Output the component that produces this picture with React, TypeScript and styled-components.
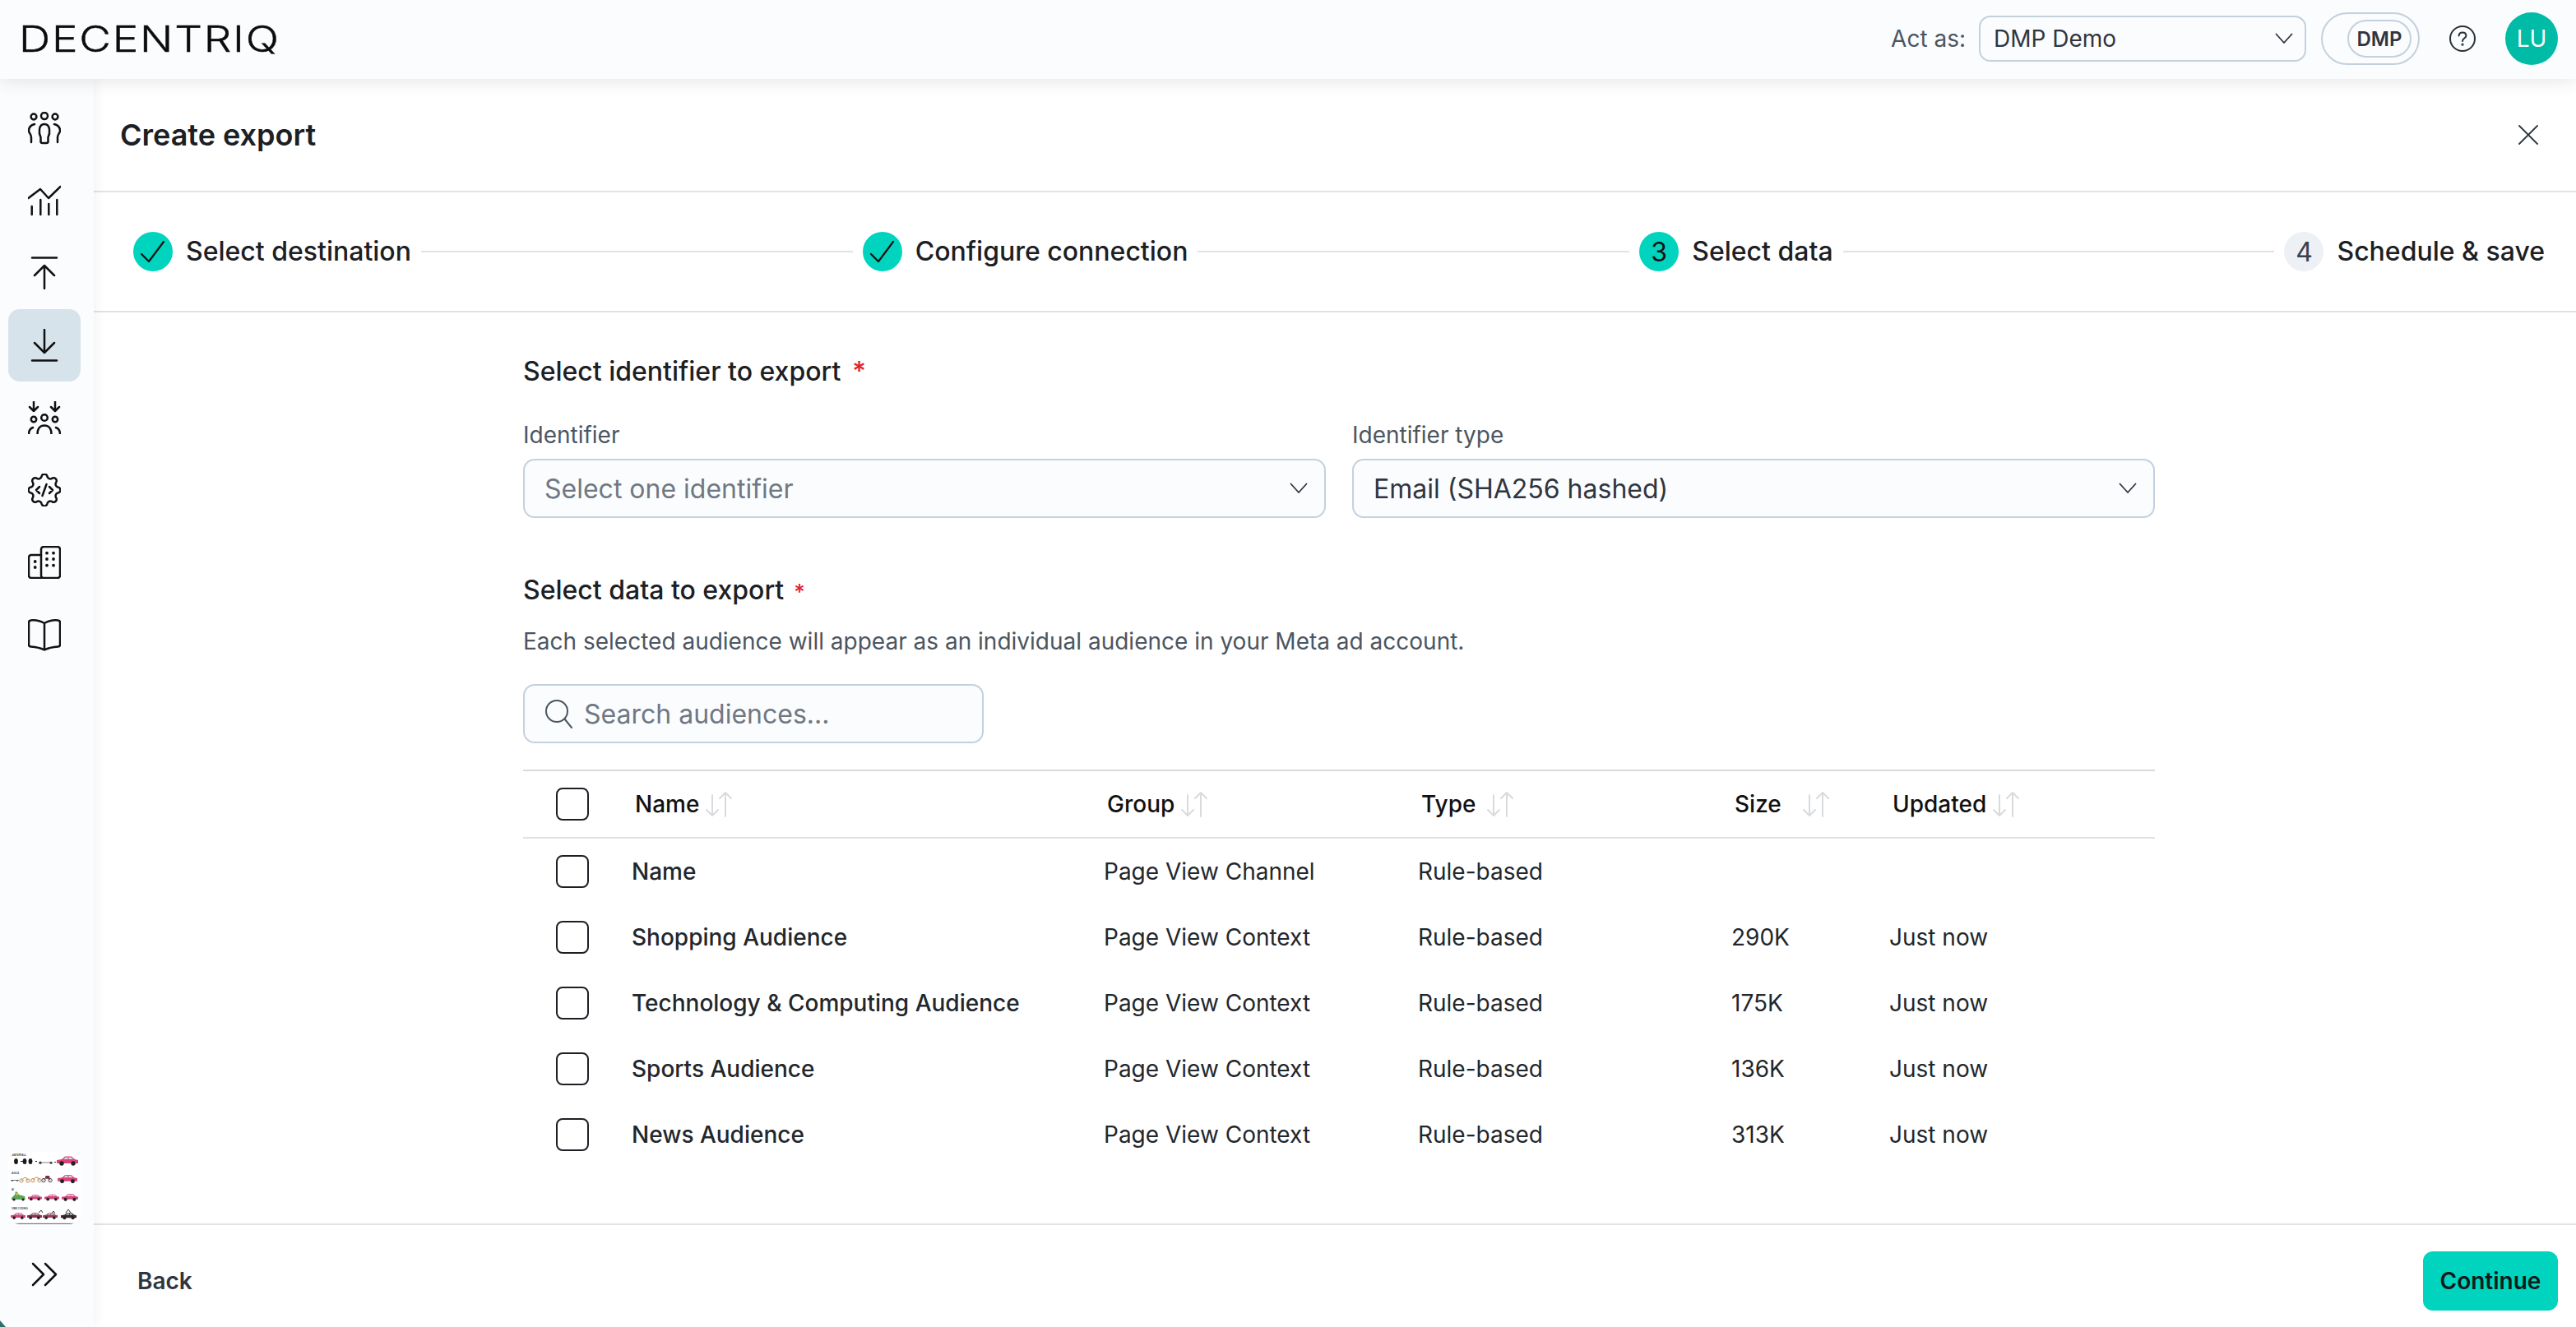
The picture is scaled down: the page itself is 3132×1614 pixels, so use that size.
import React from "react";
import styled, { createGlobalStyle } from "styled-components";

const Global = createGlobalStyle`
  html, body { margin: 0; padding: 0; background: #fff; }
  body { font-family: Inter, "Noto Sans", sans-serif; color: #1c2024; }
  * { box-sizing: border-box; }
`;

const Page = styled.div`
  width: 3132px; height: 1614px; display: flex; flex-direction: column; overflow: hidden; background: #fff;
`;
const TopBar = styled.header`
  height: 96px; flex: none; display: flex; align-items: center; justify-content: space-between;
  padding: 0 22px 0 23px; background: #fbfcfe; box-shadow: 0 2px 20px rgba(20, 30, 40, 0.12); position: relative; z-index: 2;
`;
const Logo = styled.div`
  font-size: 44px; line-height: 44px; font-weight: 300; color: #0c0c0c; letter-spacing: 1.5px;
  transform: scaleX(1.205); transform-origin: left center; -webkit-text-stroke: 0.4px #0c0c0c; margin-top: -2px;
`;
const TopActions = styled.div`display: flex; align-items: center; margin-top: -2px;`;
const ActLabel = styled.span`font-size: 28px; color: #4b5661; margin-right: 16px;`;
const ActSelect = styled.div`
  width: 398px; height: 56px; display: flex; align-items: center; justify-content: space-between;
  padding: 0 14px 0 16px; border: 2px solid #c3d1de; border-radius: 14px; font-size: 28px; color: #2f3640; background: #fbfcfe;
`;
const PillOuter = styled.div`
  width: 120px; height: 64px; margin-left: 18px; display: flex; align-items: center; justify-content: flex-end;
  padding-right: 8px; border: 2px solid #c3d1de; border-radius: 32px;
`;
const PillInner = styled.div`
  width: 78px; height: 46px; display: flex; align-items: center; justify-content: center;
  border: 2px solid #c3d1de; border-radius: 23px; font-size: 24px; font-weight: 600; color: #2f3640;
`;
const HelpWrap = styled.div`width: 32px; height: 32px; margin: 0 36px 0 36px; display: flex;`;
const Avatar = styled.div`
  width: 64px; height: 64px; border-radius: 50%; background: #00bba5; color: #fff; font-size: 28px;
  display: flex; align-items: center; justify-content: center;
`;
const Body = styled.div`flex: 1; display: flex; min-height: 0;`;
const Sidebar = styled.nav`
  width: 114px; flex: none; display: flex; flex-direction: column; align-items: flex-start; padding: 16px 0 0 10px;
  background: #fbfcfe; box-shadow: 2px 0 14px rgba(20, 30, 40, 0.06); position: relative; z-index: 1;
  &::after {
    content: ""; position: absolute; left: 0; bottom: 0; border-left: 7px solid #2f6f6b; border-top: 8px solid transparent;
  }
`;
const NavTile = styled.div<{ $active?: boolean }>`
  width: 88px; height: 88px; flex: none; display: flex; align-items: center; justify-content: center; border-radius: 14px;
  background: ${(p) => (p.$active ? "#d7e3eb" : "transparent")};
`;
const Spacer = styled.div`flex: 1;`;
const Thumb = styled.div`width: 88px; height: 88px; flex: none; display: flex; border-radius: 14px; overflow: hidden; background: #fff;`;
const CollapseTile = styled.div`height: 125px; padding-top: 46px; width: 88px; display: flex; align-items: flex-start; justify-content: center;`;
const Main = styled.main`flex: 1; min-width: 0; display: flex; flex-direction: column;`;
const DialogHead = styled.div`
  height: 138px; flex: none; display: flex; align-items: center; justify-content: space-between;
  padding: 0 46px 0 32px; border-bottom: 2px solid #e0e3e6;
`;
const DialogTitle = styled.h1`margin: 0; font-size: 36px; font-weight: 600; color: #1c2024; line-height: 44px;`;
const Stepper = styled.div`
  height: 146px; flex: none; display: flex; align-items: center; padding: 0 38px 0 48px; border-bottom: 2px solid #e0e3e6;
`;
const Step = styled.div`display: flex; align-items: center; gap: 16px; flex: none;`;
const StepDot = styled.div<{ $state: "done" | "active" | "todo" }>`
  width: 48px; height: 48px; border-radius: 50%; display: flex; align-items: center; justify-content: center;
  font-size: 32px; font-weight: 400; color: ${(p) => (p.$state === "todo" ? "#3a424b" : "#111")};
  background: ${(p) => (p.$state === "todo" ? "#edf1f5" : "#00d4be")};
`;
const StepLabel = styled.span`font-size: 32px; font-weight: 500; color: #1c2024; line-height: 40px;`;
const StepLine = styled.div`flex: 1; height: 2px; margin: 0 12px; background: #e0e3e6;`;
const Content = styled.div`flex: 1; min-height: 0; padding: 52px 0 0 522px;`;
const Form = styled.div`width: 1984px; display: flex; flex-direction: column;`;
const SectionTitle = styled.div<{ $gap?: number }>`
  font-size: 32px; font-weight: 500; line-height: 40px; height: 40px; color: #1c2024; margin-top: ${(p) => p.$gap ?? 0}px;
`;
const Star = styled.span<{ $small?: boolean }>`
  color: #e5202e; line-height: 1; font-size: ${(p) => (p.$small ? 26 : 32)}px; margin-left: ${(p) => (p.$small ? 12 : 14)}px;
`;
const FieldRow = styled.div`display: grid; grid-template-columns: 976px 976px; gap: 32px; margin-top: 40px;`;
const Field = styled.div`display: flex; flex-direction: column; gap: 12px;`;
const FieldLabel = styled.label`font-size: 28px; line-height: 34px; color: #4b5661;`;
const SelectBox = styled.div<{ $placeholder?: boolean }>`
  height: 72px; display: flex; align-items: center; justify-content: space-between; padding: 0 20px 0 24px;
  border: 2px solid #c3d1de; border-radius: 14px; background: #fbfcfe; font-size: 32px;
  color: ${(p) => (p.$placeholder ? "#6f7883" : "#2f3640")};
`;
const Help = styled.p`margin: 24px 0 0; font-size: 28px; line-height: 36px; color: #4b5661;`;
const Search = styled.div`
  width: 560px; height: 72px; margin-top: 34px; display: flex; align-items: center; gap: 14px; padding: 0 24px;
  border: 2px solid #c3d1de; border-radius: 14px; background: #fbfcfe; font-size: 32px; color: #6f7883;
`;
const Table = styled.div`margin-top: 32px; border-top: 2px solid #d8dadd;`;
const Row = styled.div<{ $head?: boolean }>`
  display: grid; grid-template-columns: 132px 574px 382px 381px 192px 1fr; align-items: center;
  height: ${(p) => (p.$head ? 82 : 80)}px; font-size: 28px; color: #22272c;
  border-bottom: ${(p) => (p.$head ? "2px solid #e0e3e6" : "none")};
`;
const Check = styled.div`
  width: 40px; height: 40px; margin-left: 40px; border: 2px solid #1c2024; border-radius: 8px; background: #fff;
`;
const NameCell = styled.div`font-weight: 500; color: #22272c;`;
const HeadCell = styled.div<{ $shift?: number }>`
  display: flex; align-items: center; font-weight: 500; color: #111; padding-left: ${(p) => p.$shift ?? 4}px;
`;
const SortSlot = styled.span<{ $gap?: number }>`display: flex; margin-left: ${(p) => p.$gap ?? 8}px;`;
const Footer = styled.div`
  height: 126px; flex: none; border-top: 2px solid #e0e3e6; display: flex; align-items: flex-start; justify-content: space-between;
  padding: 32px 22px 0 53px;
`;
const BackButton = styled.div`height: 72px; display: flex; align-items: center; font-size: 28px; font-weight: 600; color: #2f3640;`;
const PrimaryButton = styled.div`
  width: 164px; height: 72px; display: flex; align-items: center; justify-content: center; border-radius: 12px;
  background: #00d4be; font-size: 28px; font-weight: 600; color: #0f1a1c;
`;

const Ico = ({ children, w = 40, h = 40, sw = 2.5 }: { children: React.ReactNode; w?: number; h?: number; sw?: number }) => (
  <svg width={w} height={h} viewBox={`0 0 ${w} ${h}`} fill="none" stroke="#111" strokeWidth={sw} strokeLinecap="round" strokeLinejoin="round">
    {children}
  </svg>
);

const gearPath = (() => {
  const pts: string[] = [];
  for (let i = 0; i <= 160; i++) {
    const t = (i / 160) * Math.PI * 2;
    const c = Math.cos(8 * t);
    const r = 17.2 + 2.2 * (c > 0 ? Math.pow(c, 0.6) : -Math.pow(-c, 0.6));
    pts.push(`${(20 + r * Math.sin(t)).toFixed(2)} ${(20 - r * Math.cos(t)).toFixed(2)}`);
  }
  return "M" + pts.join("L") + "Z";
})();

const PeopleIcon = () => (
  <Ico>
    <circle cx="7" cy="6" r="3.4" /><circle cx="20" cy="5" r="4" /><circle cx="33" cy="6" r="3.4" />
    <path d="M15.5 31C13 26 12.5 15 20 15C27.5 15 27 26 24.5 31V36a2 2 0 0 1-2 2h-5a2 2 0 0 1-2-2Z" />
    <path d="M8 15C4 16 1 19 1 23C1 26 4 27 4 31V37" />
    <path d="M32 15C36 16 39 19 39 23C39 26 36 27 36 31V37" />
  </Ico>
);
const ChartIcon = () => (
  <Ico>
    <path d="M0.5 17L15 6L25 17L39.5 3" />
    <path d="M4.7 27V37M15.3 19V37M25.3 24V37M35.3 19V37" />
  </Ico>
);
const UploadIcon = () => (
  <Ico><path d="M5 1.5H35M20 11V39M8 23L20 11L32 23" /></Ico>
);
const DownloadIcon = () => (
  <Ico><path d="M5 38.5H35M20 29V1M8 17L20 29L32 17" /></Ico>
);
const ActivateIcon = () => (
  <Ico>
    <path d="M7 0V12M2 7L7 12L12 7M33 0V12M28 7L33 12L38 7" />
    <circle cx="7" cy="22" r="3.2" /><circle cx="20" cy="20" r="3.8" /><circle cx="33" cy="22" r="3.2" />
    <path d="M11.5 40C11.5 33 15 29.5 20 29.5C25 29.5 28.5 33 28.5 40" />
    <path d="M1 40C1 36 3 33 6 32M39 40C39 36 37 33 34 32" />
  </Ico>
);
const GearIcon = () => (
  <Ico>
    <path d={gearPath} />
    <path d="M14 16L10 20L14 24M26 16L30 20L26 24M22.5 13L17.5 27" />
  </Ico>
);
const BuildingIcon = () => (
  <Ico>
    <path d="M16 11H4a3 3 0 0 0-3 3V36a3 3 0 0 0 3 3H16" />
    <rect x="16" y="1" width="23" height="38" rx="3" />
    <g stroke="none" fill="#111">
      <circle cx="8.7" cy="19" r="1.9" /><circle cx="8.7" cy="26" r="1.9" />
      <circle cx="23" cy="8.7" r="1.9" /><circle cx="31" cy="8.7" r="1.9" />
      <circle cx="23" cy="16" r="1.9" /><circle cx="31" cy="16" r="1.9" />
      <circle cx="23" cy="23.7" r="1.9" /><circle cx="31" cy="23.7" r="1.9" />
    </g>
  </Ico>
);
const BookIcon = () => (
  <Ico>
    <path d="M20 6C15 3 8 2 3.5 2.4C2 2.5 1 3.5 1 5V32C1 33.5 2 34.5 3.5 34.6C9 35 15 36 20 38.5C25 36 31 35 36.5 34.6C38 34.5 39 33.5 39 32V5C39 3.5 38 2.5 36.5 2.4C32 2 25 3 20 6ZM20 6V38.5" />
  </Ico>
);
const DoubleChevron = () => (
  <Ico w={32} h={30}><path d="M2 2L15 15L2 28M17 2L30 15L17 28" /></Ico>
);
const ChevronDown = () => (
  <svg width="22" height="14" viewBox="0 0 22 14" fill="none" stroke="#2f3640" strokeWidth="1.8" strokeLinecap="round" strokeLinejoin="round">
    <path d="M1.5 1.5L11 12L20.5 1.5" />
  </svg>
);
const CloseIcon = () => (
  <svg width="24" height="24" viewBox="0 0 24 24" fill="none" stroke="#2f3640" strokeWidth="1.8" strokeLinecap="round">
    <path d="M1 1L23 23M23 1L1 23" />
  </svg>
);
const HelpIcon = () => (
  <svg width="32" height="32" viewBox="0 0 32 32" fill="none" stroke="#2a3036" strokeWidth="2" strokeLinecap="round">
    <circle cx="16" cy="16" r="15" />
    <path d="M11.6 12.5C11.8 9.8 13.6 8.5 16 8.5C18.5 8.5 20.4 10 20.4 12.4C20.4 15.5 16 15.6 16 19" />
    <circle cx="16" cy="23.2" r="0.6" />
  </svg>
);
const SearchIcon = () => (
  <svg width="34" height="36" viewBox="0 0 34 36" fill="none" stroke="#4b5661" strokeWidth="2" strokeLinecap="round">
    <circle cx="15" cy="15" r="13" /><path d="M24.5 24.5L33 35" />
  </svg>
);
const CheckMark = () => (
  <svg width="32" height="28" viewBox="0 0 32 28" fill="none" stroke="#111" strokeWidth="2.2" strokeLinecap="round" strokeLinejoin="round">
    <path d="M2 17L11 26L29 2" />
  </svg>
);
const SortIcon = () => (
  <svg width="32" height="32" viewBox="0 0 32 32" fill="none" stroke="#d8dbde" strokeWidth="2" strokeLinecap="round" strokeLinejoin="round">
    <path d="M8 5V30M1 23L8 30L15 23M24 31V2M17 9L24 2L31 9" />
  </svg>
);

const Car = ({ x, y, w, fill = "#d9427a" }: { x: number; y: number; w: number; fill?: string }) => (
  <g transform={`translate(${x} ${y}) scale(${w / 26})`}>
    <path d="M0 -1L6 -2L10 -5.5H18L22 -2L26 -1V3H0Z" fill={fill} />
    <path d="M10.6 -4.6H13.6V-2H8ZM14.6 -4.6H17.6L20.2 -2H14.6Z" fill="#cfd6e0" />
    <circle cx="6" cy="3" r="2.7" fill="#222" /><circle cx="20" cy="3" r="2.7" fill="#222" />
  </g>
);
const Bike = ({ x, y, color = "#b9824a" }: { x: number; y: number; color?: string }) => (
  <g fill="none" stroke={color} strokeWidth="0.9">
    <circle cx={x} cy={y} r="2.2" /><circle cx={x + 8} cy={y} r="2.2" />
    <path d={`M${x} ${y}L${x + 3} ${y - 3.5}H${x + 6}L${x + 8} ${y}`} />
  </g>
);
const ThumbLabel = styled.text`font-family: "Liberation Sans", sans-serif; font-weight: 700; fill: #444;`;
const ThumbArt = () => (
  <svg width="88" height="88" viewBox="0 0 88 88">
    <rect width="88" height="88" fill="#fff" />
    <ThumbLabel x="4" y="5" fontSize="3">WATERFALL</ThumbLabel>
    <ThumbLabel x="4" y="27" fontSize="3">AGILE</ThumbLabel>
    <ThumbLabel x="4" y="47" fontSize="3">AI</ThumbLabel>
    <ThumbLabel x="4" y="70" fontSize="3">VIBE CODING</ThumbLabel>
    <g fill="#1a1a1a">
      <ellipse cx="9.5" cy="11.5" rx="2.4" ry="3.6" />
      <rect x="15" y="11" width="3" height="1" />
      <ellipse cx="20" cy="11.5" rx="2.4" ry="3.6" /><ellipse cx="27" cy="11.5" rx="2.4" ry="3.6" />
      <rect x="33" y="11" width="2" height="1" />
      <rect x="37" y="12.6" width="17" height="0.8" fill="#666" /><circle cx="39" cy="13.2" r="1.7" fill="#444" /><circle cx="52" cy="13.2" r="1.5" fill="#444" />
      <rect x="3" y="34" width="10" height="0.8" fill="#555" /><circle cx="5" cy="35" r="1" fill="#555" /><circle cx="11" cy="35" r="1" fill="#555" />
    </g>
    <rect x="56" y="12" width="2" height="1" fill="#333" />
    <Bike x={16} y={35} /><Bike x={30} y={34.6} />
    <Bike x={43} y={34.6} color="#333" />
    <rect x="45" y="29" width="5.5" height="3.8" rx="1.5" fill="#7a2b3d" />
    <Car x={59} y={11} w={26} /><Car x={60} y={33} w={24} />
    <path d="M4 56L8 52L9 48L11 49L13 52L20 54L21 58H4Z" fill="#5aa457" />
    <path d="M9 50h3v3H9Z" fill="#d9b23a" />
    <circle cx="7" cy="58" r="1.6" fill="#222" /><circle cx="18" cy="58" r="1.6" fill="#222" />
    <Car x={24} y={55.5} w={17} /><Car x={44} y={55.5} w={18} /><Car x={65} y={55.5} w={20} />
    <Car x={3} y={78} w={18} /><Car x={23} y={78} w={18} fill="#8c3352" /><Car x={42} y={78} w={18} fill="#a03d5f" /><Car x={64} y={78} w={19} fill="#3b2a2f" />
    <path d="M37 74l3-3 2 3M53 75l2-3 2 3M70 74l3-4 3 4" stroke="#333" strokeWidth="1" fill="none" />
    <rect x="4" y="86.8" width="78" height="1.2" fill="#777" />
  </svg>
);

const navItems = [PeopleIcon, ChartIcon, UploadIcon, DownloadIcon, ActivateIcon, GearIcon, BuildingIcon, BookIcon];

const steps: { label: string; state: "done" | "active" | "todo"; n?: number }[] = [
  { label: "Select destination", state: "done" },
  { label: "Configure connection", state: "done" },
  { label: "Select data", state: "active", n: 3 },
  { label: "Schedule & save", state: "todo", n: 4 },
];

const rows = [
  ["Name", "Page View Channel", "Rule-based", "", ""],
  ["Shopping Audience", "Page View Context", "Rule-based", "290K", "Just now"],
  ["Technology & Computing Audience", "Page View Context", "Rule-based", "175K", "Just now"],
  ["Sports Audience", "Page View Context", "Rule-based", "136K", "Just now"],
  ["News Audience", "Page View Context", "Rule-based", "313K", "Just now"],
];

export default function App() {
  return (
    <Page>
      <Global />
      <TopBar>
        <Logo>DECENTRIQ</Logo>
        <TopActions>
          <ActLabel>Act as:</ActLabel>
          <ActSelect>DMP Demo<ChevronDown /></ActSelect>
          <PillOuter><PillInner>DMP</PillInner></PillOuter>
          <HelpWrap><HelpIcon /></HelpWrap>
          <Avatar>LU</Avatar>
        </TopActions>
      </TopBar>
      <Body>
        <Sidebar>
          {navItems.map((Icon, i) => (
            <NavTile key={i} $active={i === 3}><Icon /></NavTile>
          ))}
          <Spacer />
          <Thumb><ThumbArt /></Thumb>
          <CollapseTile><DoubleChevron /></CollapseTile>
        </Sidebar>
        <Main>
          <DialogHead>
            <DialogTitle>Create export</DialogTitle>
            <CloseIcon />
          </DialogHead>
          <Stepper>
            {steps.map((s, i) => (
              <React.Fragment key={s.label}>
                {i > 0 && <StepLine />}
                <Step>
                  <StepDot $state={s.state}>{s.state === "done" ? <CheckMark /> : s.n}</StepDot>
                  <StepLabel>{s.label}</StepLabel>
                </Step>
              </React.Fragment>
            ))}
          </Stepper>
          <Content>
            <Form>
              <SectionTitle>Select identifier to export<Star>*</Star></SectionTitle>
              <FieldRow>
                <Field>
                  <FieldLabel>Identifier</FieldLabel>
                  <SelectBox $placeholder>Select one identifier<ChevronDown /></SelectBox>
                </Field>
                <Field>
                  <FieldLabel>Identifier type</FieldLabel>
                  <SelectBox>Email (SHA256 hashed)<ChevronDown /></SelectBox>
                </Field>
              </FieldRow>
              <SectionTitle $gap={68}>Select data to export<Star $small>*</Star></SectionTitle>
              <Help>Each selected audience will appear as an individual audience in your Meta ad account.</Help>
              <Search><SearchIcon />Search audiences...</Search>
              <Table>
                <Row $head>
                  <Check />
                  <HeadCell>Name<SortSlot><SortIcon /></SortSlot></HeadCell>
                  <HeadCell>Group<SortSlot><SortIcon /></SortSlot></HeadCell>
                  <HeadCell>Type<SortSlot $gap={14}><SortIcon /></SortSlot></HeadCell>
                  <HeadCell>Size<SortSlot $gap={26}><SortIcon /></SortSlot></HeadCell>
                  <HeadCell>Updated<SortSlot><SortIcon /></SortSlot></HeadCell>
                </Row>
                {rows.map((r) => (
                  <Row key={r[0]}>
                    <Check />
                    <NameCell>{r[0]}</NameCell>
                    <div>{r[1]}</div>
                    <div>{r[2]}</div>
                    <div>{r[3]}</div>
                    <div>{r[4]}</div>
                  </Row>
                ))}
              </Table>
            </Form>
          </Content>
          <Footer>
            <BackButton>Back</BackButton>
            <PrimaryButton>Continue</PrimaryButton>
          </Footer>
        </Main>
      </Body>
    </Page>
  );
}
